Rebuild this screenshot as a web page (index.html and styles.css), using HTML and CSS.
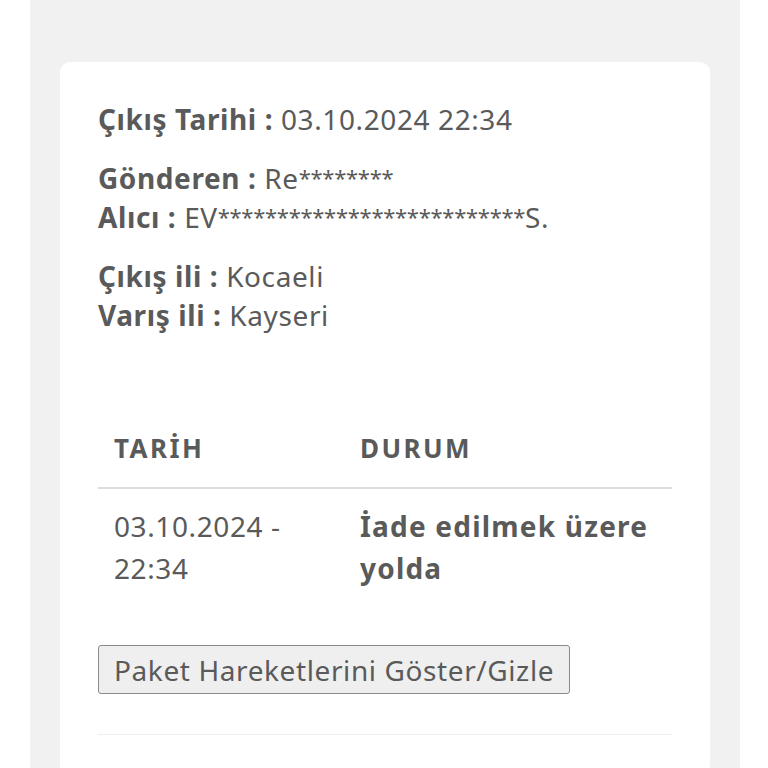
FILE: index.html
```html
<!DOCTYPE html>
<html lang="tr">
<head>
	<title>Kargo Takip</title>
	<meta name="viewport" content="width=device-width, initial-scale=1">
	<link rel="stylesheet" href="styles.css">
</head>
<body>
	<div class="page">
		<div class="card">
			<p class="info"><b>Çıkış Tarihi :</b> 03.10.2024 22:34</p>
			<p class="info"><b>Gönderen :</b> Re<span class="mask">********</span><br><b>Alıcı :</b> EV<span class="mask">**************************</span>S.</p>
			<p class="info"><b>Çıkış ili :</b> Kocaeli<br><b>Varış ili :</b> Kayseri</p>

			<table class="moves">
				<thead>
					<tr>
						<th class="date">TARİH</th>
						<th>DURUM</th>
					</tr>
				</thead>
				<tbody>
					<tr>
						<td class="date">03.10.2024 - 22:34</td>
						<td class="status">İade edilmek üzere yolda</td>
					</tr>
				</tbody>
			</table>

			<button class="toggle" type="button">Paket Hareketlerini Göster/Gizle</button>
			<hr class="sep">
		</div>
	</div>
</body>
</html>
```

FILE: styles.css
```css
html,
body {
	margin: 0;
	padding: 0;
	background: #fff;
	overflow: hidden;
}

:root {
	--text: #5a5a5a;
	--font: "Noto Sans", "Open Sans", sans-serif;
}

.page {
	box-sizing: border-box;
	height: 100vh;
	margin: 0 28px 0 30px;
	padding: 62px 30px 0;
	background: #f1f1f1;
	overflow: hidden;
}

.card {
	background: #fff;
	border-radius: 10px;
	padding: 38px 38px 40px;
	color: var(--text);
	font: 28px var(--font);
	letter-spacing: 0.6px;
}

.info {
	margin: 0 0 20px;
	line-height: 39px;
}

.info b { font-weight: 700; }

.info .mask {
	font-size: 22px;
	line-height: 0;
	letter-spacing: -0.3px;
	vertical-align: 3px;
}

.moves {
	width: 100%;
	margin-top: 76px;
	border-collapse: collapse;
	text-align: left;
}

.moves th,
.moves td {
	padding: 16px;
	line-height: 42px;
	vertical-align: top;
}

.moves th {
	font-weight: 700;
	font-size: 26px;
	letter-spacing: 2.4px;
	border-bottom: 2px solid #ddd;
	padding-bottom: 18px;
}

.moves .date { width: 214px; }

.moves .status {
	font-weight: 700;
	letter-spacing: 1.2px;
}

.toggle {
	margin-top: 40px;
	padding: 0 15px;
	height: 49px;
	background: #efefef;
	border: 1px solid #8a8a8a;
	border-radius: 3px;
	color: var(--text);
	font: 28px var(--font);
	letter-spacing: 0.6px;
}

.sep {
	margin: 40px 0 0;
	border: 0;
	border-top: 1px solid #eee;
}
```
